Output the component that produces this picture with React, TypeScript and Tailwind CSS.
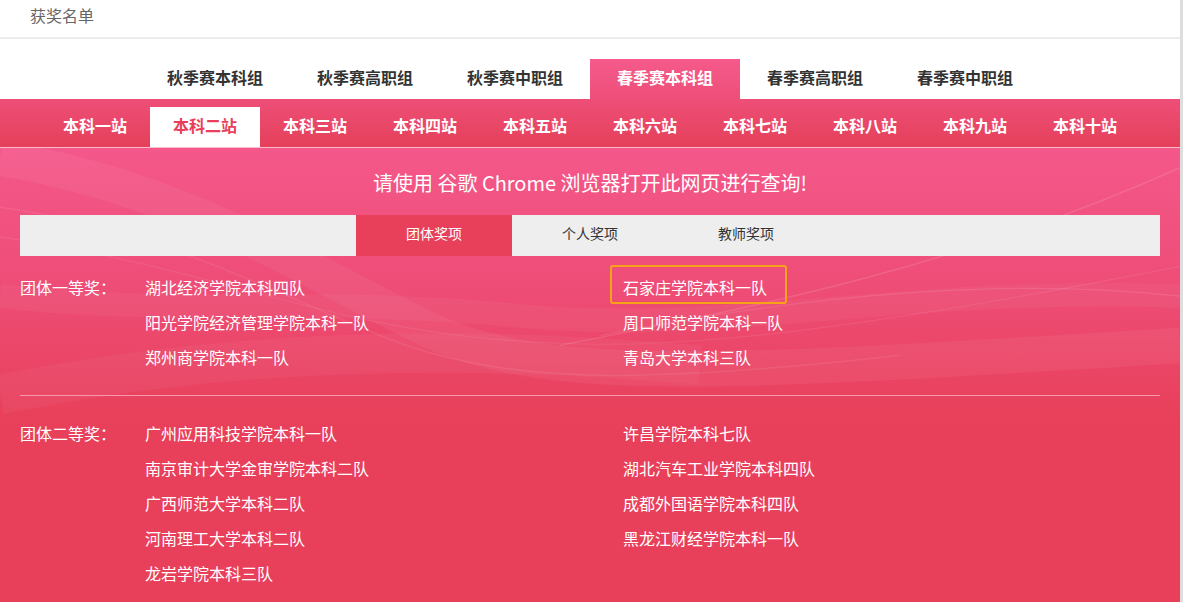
import React from "react";

const seasonTabs = ["秋季赛本科组", "秋季赛高职组", "秋季赛中职组", "春季赛本科组", "春季赛高职组", "春季赛中职组"];
const stations = ["本科一站", "本科二站", "本科三站", "本科四站", "本科五站", "本科六站", "本科七站", "本科八站", "本科九站", "本科十站"];
const awardTabs = ["团体奖项", "个人奖项", "教师奖项"];

type Group = { label: string; left: string[]; right: string[]; pad: string };

const groups: Group[] = [
  {
    label: "团体一等奖：",
    left: ["湖北经济学院本科四队", "阳光学院经济管理学院本科一队", "郑州商学院本科一队"],
    right: ["石家庄学院本科一队", "周口师范学院本科一队", "青岛大学本科三队"],
    pad: "pt-[14px] pb-[20px] border-b border-[#f59aae]",
  },
  {
    label: "团体二等奖：",
    left: ["广州应用科技学院本科一队", "南京审计大学金审学院本科二队", "广西师范大学本科二队", "河南理工大学本科二队", "龙岩学院本科三队"],
    right: ["许昌学院本科七队", "湖北汽车工业学院本科四队", "成都外国语学院本科四队", "黑龙江财经学院本科一队"],
    pad: "pt-[20px]",
  },
];

function Waves() {
  return (
    <svg aria-hidden="true" className="pointer-events-none absolute inset-0 h-full w-full" viewBox="0 0 1180 460" preserveAspectRatio="none" fill="none">
      <path d="M0 10 C 180 40, 300 120, 420 180 S 700 230, 1180 200" stroke="#ffffff" strokeOpacity="0.05" strokeWidth="36" />
      <path d="M0 60 C 150 80, 260 140, 380 190 S 640 240, 900 210" stroke="#ffffff" strokeOpacity="0.08" strokeWidth="1.5" />
      <path d="M0 90 C 200 120, 300 170, 460 190 S 780 200, 1180 120" stroke="#ffffff" strokeOpacity="0.08" strokeWidth="1.2" />
      <path d="M0 150 C 160 170, 320 150, 520 170 S 900 140, 1180 150" stroke="#ffffff" strokeOpacity="0.04" strokeWidth="24" />
      <path d="M560 200 C 760 160, 960 120, 1180 20" stroke="#ffffff" strokeOpacity="0.12" strokeWidth="1.5" />
      <path d="M600 190 C 800 150, 1000 130, 1180 150" stroke="#ffffff" strokeOpacity="0.10" strokeWidth="1.2" />
      <path d="M0 250 C 240 200, 480 200, 700 220" stroke="#ffffff" strokeOpacity="0.04" strokeWidth="40" />
    </svg>
  );
}

export default function App() {
  return (
    <div className="flex min-h-[602px] w-[1183px] bg-white font-['Microsoft_YaHei','Noto_Sans_CJK_SC',sans-serif]">
      <div className="flex w-[1180px] flex-col">
        {/* header */}
        <div className="flex h-[39px] items-center border-b-2 border-[#ececec] pb-[8px] pl-[30px] text-[16px] text-[#666]">获奖名单</div>

        {/* season tabs */}
        <div className="flex justify-center pt-[20px]">
          {seasonTabs.map((t, i) => (
            <div
              key={t}
              className={
                i === 3
                  ? "flex h-[40px] w-[150px] items-center justify-center bg-[linear-gradient(180deg,#f45a8b,#ee4f79)] pb-[4px] text-[16px] font-bold text-white"
                  : "flex h-[40px] w-[150px] items-center justify-center pb-[4px] text-[16px] font-bold text-[#333]"
              }
            >
              {t}
            </div>
          ))}
        </div>

        {/* station bar */}
        <div className="flex h-[49px] items-end justify-center border-b border-[#f7bccb] bg-[linear-gradient(180deg,#ee4f78,#e5405a)]">
          {stations.map((s, i) => (
            <div
              key={s}
              className={
                i === 1
                  ? "flex h-[40px] w-[110px] items-center justify-center bg-white pb-[4px] text-[16px] font-bold text-[#e8405a]"
                  : "flex h-[40px] w-[110px] items-center justify-center pb-[4px] text-[16px] font-bold text-white"
              }
            >
              {s}
            </div>
          ))}
        </div>

        {/* main */}
        <div className="relative flex-1 overflow-hidden bg-[linear-gradient(180deg,#f4588a_0%,#ee4d77_30%,#e8405a_60%,#e8405a_100%)] px-[20px]">
          <Waves />
          <div className="relative">
            <div className="flex h-[67px] items-center justify-center pt-[3px] text-[20px] text-white">请使用 谷歌 Chrome 浏览器打开此网页进行查询!</div>
            <div className="flex h-[41px] justify-center bg-[#eeeeee]">
              {awardTabs.map((t, i) => (
                <div
                  key={t}
                  className={
                    i === 0
                      ? "flex w-[156px] items-center justify-center bg-[#e8405a] pb-[4px] text-[14px] text-white"
                      : "flex w-[156px] items-center justify-center pb-[4px] text-[14px] text-[#333]"
                  }
                >
                  {t}
                </div>
              ))}
            </div>

            {groups.map((g) => (
              <div key={g.label} className={`flex text-[16px] text-white ${g.pad}`}>
                <div className="w-[125px] shrink-0 leading-[35px]">{g.label}</div>
                <div className="flex w-[478px] flex-col">
                  {g.left.map((n) => (
                    <div key={n} className="h-[35px] leading-[35px]">{n}</div>
                  ))}
                </div>
                <div className="flex flex-col">
                  {g.right.map((n) => (
                    <div key={n} className="h-[35px] leading-[35px]">
                      <span className="relative inline-block">
                        {n}
                        {n === "石家庄学院本科一队" && (
                          <span className="absolute -top-[5px] bottom-[1px] -left-[13px] w-[177px] rounded-[3px] border-2 border-[#f7a318]" />
                        )}
                      </span>
                    </div>
                  ))}
                </div>
              </div>
            ))}
          </div>
        </div>
      </div>
      <div className="w-[3px] bg-[#dedede]" />
    </div>
  );
}
